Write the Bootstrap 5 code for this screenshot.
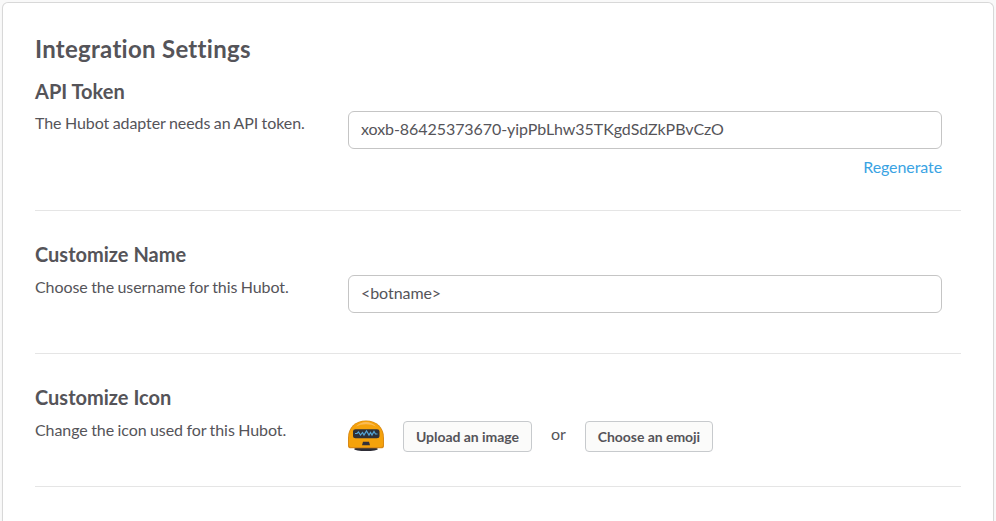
<!DOCTYPE html>
<html lang="en">
<head>
<meta charset="utf-8">
<meta name="viewport" content="width=device-width, initial-scale=1">
<title>Integration Settings</title>
<link href="https://cdn.jsdelivr.net/npm/bootstrap@5.3.0/dist/css/bootstrap.min.css" rel="stylesheet">
<style>
body { background: #f9f9f9; color: #555459; font-family: Lato, sans-serif; font-size: 16px; line-height: 24px; height: 521px; overflow: hidden; font-variant-ligatures: none; }
.settings-card { margin: 2px 2px 0; height: 519px; padding: 32px 32px 0; border: 1px solid #d8d8d8; border-bottom: 0; border-radius: 6px 6px 0 0; box-shadow: 0 1px 1px rgba(0,0,0,.08); color: inherit; }
h2 { font-size: 24px; line-height: 28px; font-weight: 700; margin: 0; letter-spacing: .28px; }
h4 { font-size: 20px; line-height: 24px; font-weight: 700; margin: 0 0 8px; }
.setting { padding-top: 31px; border-bottom: 1px solid #e5e5e5; }
.setting h4 { margin-bottom: 9px; }
.setting-token { height: 148px; padding-top: 16px; }
.setting-token h4 { margin-bottom: 8px; }
.setting-name { height: 143px; }
.setting-icon { height: 133px; }
.label-col { width: 313px; letter-spacing: -.075px; word-spacing: -.55px; }
.field-col { width: 594px; }
.field-col .form-control { height: 38px; padding: 5px 12px 8px; font-size: 16px; line-height: 23px; letter-spacing: -.065px; color: #555459; border-color: #c5c5c5; border-radius: 6px; }
.regen { color: #3aa3e3; margin-top: 6px; letter-spacing: -.09px; }
.bot-icon { width: 36px; height: 36px; margin-right: 19px; }
.btn-plain { height: 31px; padding: 3px 12px 2px; font-size: 14px; line-height: 24px; font-weight: 700; letter-spacing: -.05px; color: #555459; background: #fbfbfa; border: 1px solid #c7cacd; border-radius: 4px; }
.or-text { margin: 0 19px; position: relative; top: -2px; }
</style>
</head>
<body>
<main class="card settings-card">
  <h2>Integration Settings</h2>
  <section class="setting setting-token">
    <h4>API Token</h4>
    <div class="d-flex">
      <div class="label-col flex-shrink-0">The Hubot adapter needs an API token.</div>
      <div class="field-col d-flex flex-column">
        <input class="form-control shadow-none" type="text" aria-label="API Token" value="xoxb-86425373670-yipPbLhw35TKgdSdZkPBvCzO">
        <a class="regen text-decoration-none align-self-end" href="#">Regenerate</a>
      </div>
    </div>
  </section>
  <section class="setting setting-name">
    <h4>Customize Name</h4>
    <div class="d-flex">
      <div class="label-col flex-shrink-0">Choose the username for this Hubot.</div>
      <div class="field-col">
        <input class="form-control shadow-none" type="text" aria-label="Name" value="&lt;botname&gt;">
      </div>
    </div>
  </section>
  <section class="setting setting-icon">
    <h4>Customize Icon</h4>
    <div class="d-flex">
      <div class="label-col flex-shrink-0">Change the icon used for this Hubot.</div>
      <div class="field-col d-flex align-items-center">
        <svg class="bot-icon" viewBox="0 0 36 36" aria-hidden="true">
          <ellipse cx="18" cy="31" rx="12" ry="2" fill="#2e2d36"/>
          <path d="M0 28V20C0 9 7.500 2.500 18 2.500S36 9 36 20v8q0 2.300-3 2.300H3Q0 30.300 0 28z" fill="#d98a16"/>
          <path d="M1 27V19.500C1 9.500 8 3 18 3s17 6.500 17 16.500V27q0 2-3 2H4Q1 29 1 27z" fill="#f5a20b"/>
          <path d="M8 8.500Q12 4 18 4T28 8.500Q24 6.300 18 6.300T8 8.500z" fill="#fbbb55"/>
          <path d="M7.500 11.200h21.500q2.500 0 2.500 2v5q0 2-2.500 2H7.500q-2.500 0-2.500-2v-5q0-2 2.500-2z" fill="#2e3038"/>
          <path d="M7 15.500h2l1.500-1.500 2 3 2-2.500 1.500 2.500 2.500-4 2.500 4 1.500-2.500 1.500 2.500 2-3.500 1.500 2.500h2" fill="none" stroke="#55a5d6" stroke-width="1.200"/>
          <path d="M15 23.800h6l1 3.400h-8z" fill="#353139"/>
        </svg>
        <button type="button" class="btn btn-plain">Upload an image</button>
        <span class="or-text">or</span>
        <button type="button" class="btn btn-plain">Choose an emoji</button>
      </div>
    </div>
  </section>
</main>
<script src="https://cdn.jsdelivr.net/npm/bootstrap@5.3.0/dist/js/bootstrap.bundle.min.js"></script>
</body>
</html>
